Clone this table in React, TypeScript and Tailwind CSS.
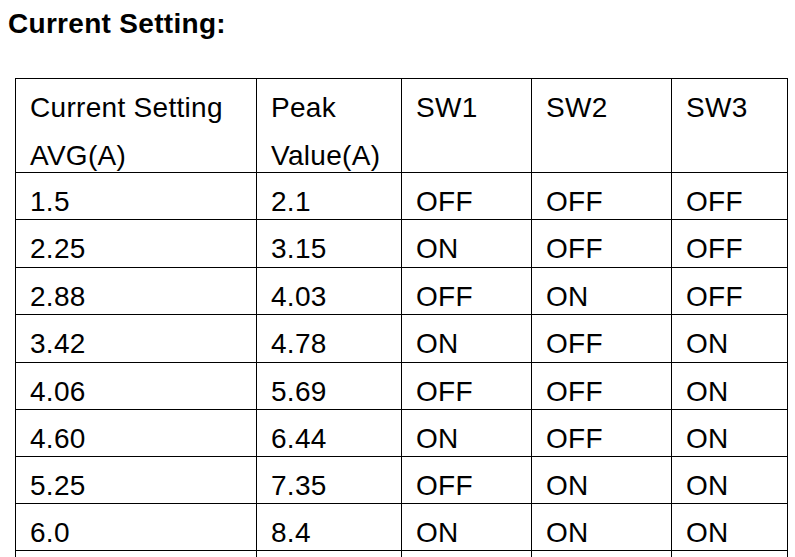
const rows = [
  { avg: '1.5', peak: '2.1', sw: ['OFF', 'OFF', 'OFF'], h: 'h-[47px]' },
  { avg: '2.25', peak: '3.15', sw: ['ON', 'OFF', 'OFF'], h: 'h-[48px]' },
  { avg: '2.88', peak: '4.03', sw: ['OFF', 'ON', 'OFF'], h: 'h-[47px]' },
  { avg: '3.42', peak: '4.78', sw: ['ON', 'OFF', 'ON'], h: 'h-[48px]' },
  { avg: '4.06', peak: '5.69', sw: ['OFF', 'OFF', 'ON'], h: 'h-[47px]' },
  { avg: '4.60', peak: '6.44', sw: ['ON', 'OFF', 'ON'], h: 'h-[47px]' },
  { avg: '5.25', peak: '7.35', sw: ['OFF', 'ON', 'ON'], h: 'h-[47px]' },
  { avg: '6.0', peak: '8.4', sw: ['ON', 'ON', 'ON'], h: 'h-[47px]' },
];

const cell = 'border-l border-t border-black pl-[14px] pt-[5px] leading-[48px] whitespace-nowrap';

const App = () => {
  return (
    <div
      className="h-[557px] w-[795px] overflow-hidden bg-white text-black tracking-[0.3px]"
      style={{ fontFamily: '"Liberation Sans", Arial, sans-serif' }}
    >
      <h1 className="pl-[8px] pt-[8px] text-[28px] font-bold leading-[32px]">Current Setting:</h1>

      <div className="ml-[15px] mt-[38px] grid grid-cols-[241px_145px_130px_140px_117px] text-[28px]">
        {/* header */}
        <div className={`${cell} h-[94px]`}>
          Current Setting
          <br />
          AVG(A)
        </div>
        <div className={`${cell} h-[94px]`}>
          Peak
          <br />
          Value(A)
        </div>
        <div className={`${cell} h-[94px]`}>SW1</div>
        <div className={`${cell} h-[94px]`}>SW2</div>
        <div className={`${cell} h-[94px] border-r`}>SW3</div>

        {rows.map((r) => (
          <div key={r.avg} className="contents">
            <div className={`${cell} ${r.h}`}>{r.avg}</div>
            <div className={`${cell} ${r.h}`}>{r.peak}</div>
            <div className={`${cell} ${r.h}`}>{r.sw[0]}</div>
            <div className={`${cell} ${r.h}`}>{r.sw[1]}</div>
            <div className={`${cell} ${r.h} border-r`}>{r.sw[2]}</div>
          </div>
        ))}

        {/* next row, cut off by the page edge */}
        <div className={`${cell} h-[47px]`} />
        <div className={`${cell} h-[47px]`} />
        <div className={`${cell} h-[47px]`} />
        <div className={`${cell} h-[47px]`} />
        <div className={`${cell} h-[47px] border-r`} />
      </div>
    </div>
  );
};

export default App;
